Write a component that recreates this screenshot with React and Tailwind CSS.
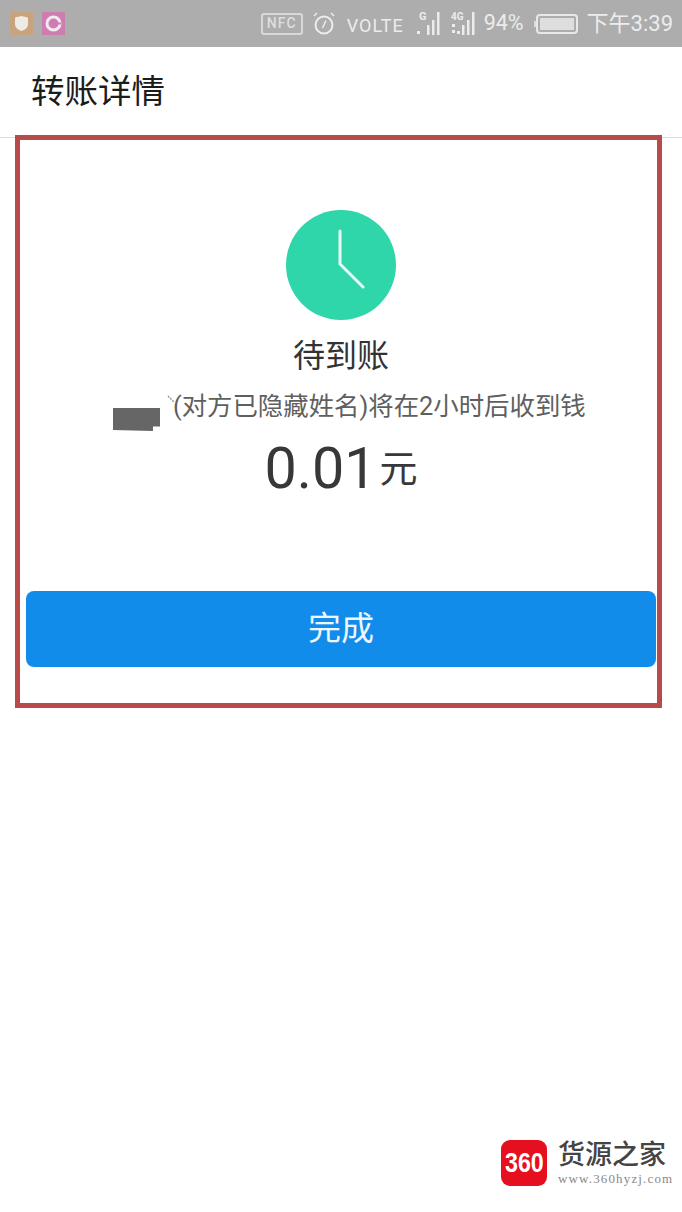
const cjk = "font-['Roboto','Noto_Sans_CJK_SC',sans-serif]";

const SignalIcon = ({ label, dots }) => (
  <svg width="24" height="25" viewBox="0 0 24 25" className="text-[#ececec]">
    <text x={dots ? 0 : 3} y="9" fontSize={dots ? 10 : 11} fontWeight="700" fill="currentColor" fontFamily="Roboto, sans-serif">{label}</text>
    {dots && <path d="M1 13h3v3H1zM1 19h3v3H1z" fill="currentColor" />}
    <rect x={dots ? 6 : 1} y="20" width="3" height="3" fill="currentColor" />
    <rect x="11" y="14" width="2.500" height="10" fill="currentColor" />
    <rect x="16" y="9" width="2.500" height="15" fill="currentColor" />
    <rect x="21" y="1" width="2.500" height="23" fill="currentColor" />
  </svg>
);

const StatusBar = () => (
  <div className="flex h-[47px] items-center bg-[#adadad] pl-[10px] pr-[9px] text-[#ececec]">
    {/* app notifications */}
    <div className="flex h-[23px] w-[23px] items-center justify-center bg-[#c9a37d]">
      <svg width="15" height="17" viewBox="0 0 15 17">
        <path d="M1 2.500 7.500 1 14 2.500V9c0 3.500-3 6-6.500 7C4 15 1 12.500 1 9z" fill="#ecebe6" />
      </svg>
    </div>
    <div className="ml-[9px] flex h-[23px] w-[23px] items-center justify-center bg-[#cc7eb0]">
      <svg width="17" height="17" viewBox="0 0 17 17" fill="none">
        <circle cx="8.500" cy="8.500" r="6.500" stroke="#f6e8f1" strokeWidth="3" />
        <path d="M9 8.500h7" stroke="#cc7eb0" strokeWidth="2" />
      </svg>
    </div>

    <div className="ml-auto flex items-center">
      <div className="flex h-[22px] w-[42px] items-center justify-center rounded-[3px] border-2 border-[#d8d8d8] font-['Roboto',sans-serif] text-[14px] font-medium tracking-[1px] text-[#dedede]">
        NFC
      </div>
      <svg width="24" height="26" viewBox="0 0 24 26" fill="none" stroke="currentColor" strokeWidth="2" className="ml-[9px]">
        <circle cx="12" cy="14" r="8.500" />
        <path d="M14 9.500 10.500 17M2 5l3-3M22 5l-3-3" strokeWidth="1.500" />
      </svg>
      <span className="ml-[11px] mt-[3px] font-['Roboto',sans-serif] text-[18px] tracking-[1px]">VOLTE</span>
      <div className="ml-[12px] flex"><SignalIcon label="G" /></div>
      <div className="ml-[11px] flex"><SignalIcon label="4G" dots /></div>
      <span className="ml-[9px] font-['Roboto',sans-serif] text-[21.500px]">94%</span>
      <div className="ml-[10px] flex items-center">
        <div className="h-[6px] w-[2px] bg-[#dcdcdc]" />
        <div className="h-[20px] w-[42px] rounded-[4px] border-2 border-[#e8e8e8] p-[2px]">
          <div className="h-full w-full bg-[#dedede]" />
        </div>
      </div>
      <span className={`ml-[9px] text-[22px] ${cjk}`}>下午3:39</span>
    </div>
  </div>
);

const Watermark = () => (
  <div className="absolute left-[501px] top-[1140px] flex items-start">
    <div className="flex h-[46px] w-[46px] items-center justify-center rounded-[9px] bg-[#e60f20] font-['Liberation_Sans',sans-serif] text-[28px] font-bold text-white">
      <span className="scale-x-[0.83]">360</span>
    </div>
    <div className="ml-[11px] flex flex-col">
      <span className="text-[27px] font-medium leading-[30px] text-[#444]">货源之家</span>
      <span className="mt-[2px] font-['Liberation_Serif',serif] text-[13px] leading-[14px] tracking-[1.150px] text-[#888]">www.360hyzj.com</span>
    </div>
  </div>
);

export default function App() {
  return (
    <div className={`relative h-[1212px] w-[682px] overflow-hidden bg-white ${cjk}`}>
      <StatusBar />

      <div className="flex h-[91px] items-center border-b border-[#dcdcdc] pl-[31px] text-[33.500px] text-[#1c1c1c]">
        转账详情
      </div>

      {/* red annotation box */}
      <div className="-mt-[3px] ml-[15px] h-[573px] w-[647px] border-[5px] border-[#b94a4a] bg-white">
        <div className="flex flex-col items-center pl-[5px] pt-[70px]">
          <div className="flex h-[110px] w-[110px] items-center justify-center rounded-full bg-[#2fd6a9]">
            <svg width="110" height="110" viewBox="0 0 110 110" fill="none">
              <path d="M54 21V54L77 77" stroke="#e9fbf5" strokeWidth="3" strokeLinecap="round" strokeLinejoin="round" />
            </svg>
          </div>
          <div className="mt-[15px] text-[32px] leading-[42px] text-[#333]">待到账</div>
          <div className="mt-[12px] w-full pl-[148px] text-[25.400px] leading-[34px] text-[#5f5f5f]">(对方已隐藏姓名)将在2小时后收到钱</div>
          <div className="mt-[11px] flex items-center text-[#383838]">
            <span className="text-[57.500px] leading-[70px]">0.01</span>
            <span className="ml-[3px] text-[38px] leading-[70px]">元</span>
          </div>
        </div>

        <button className="ml-[6px] mt-[87px] block h-[76px] w-[630px] rounded-[8px] bg-[#118cea] text-[33px] text-[#eef7fe]">
          完成
        </button>
      </div>

      {/* redaction blob over the name */}
      <div className="absolute left-[113px] top-[408px] h-[23px] w-[47px] bg-[#666] [clip-path:polygon(0_0,100%_0,100%_80%,85%_80%,85%_100%,0_96%)]" />
      <svg width="9" height="11" viewBox="0 0 9 11" fill="none" className="absolute left-[167px] top-[395px]">
        <path d="M1 1l6 6" stroke="#9a9a9a" strokeWidth="1.500" strokeDasharray="2 1" />
      </svg>
      <Watermark />
    </div>
  );
}
